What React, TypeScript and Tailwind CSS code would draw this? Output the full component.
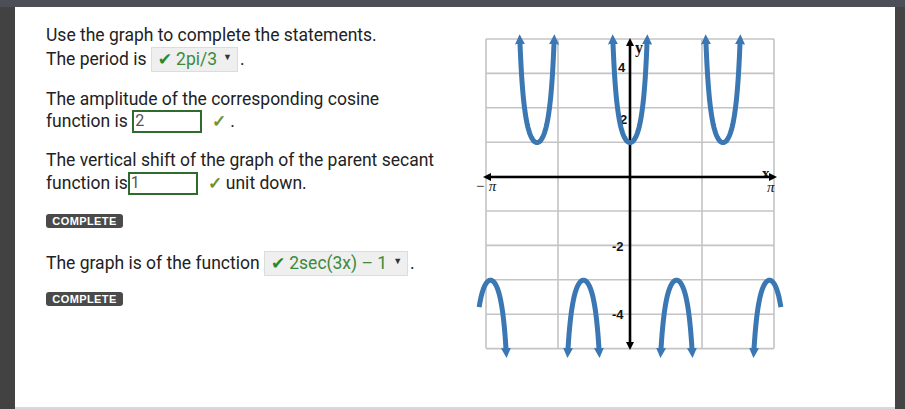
import React from 'react';

// graph scale in page pixels
const X0 = 630;
const Y0 = 177;
const SX = 139.5 / Math.PI;
const SY = 34.4;

const px = (x: number) => X0 + x * SX;
const py = (y: number) => Y0 - y * SY;

function branch(a: number, b: number) {
  const pts: string[] = [];
  const n = 60;
  for (let i = 0; i <= n; i++) {
    const t = a + ((b - a) * i) / n;
    const y = 2 / Math.cos(3 * t) - 1;
    pts.push(`${px(t).toFixed(2)},${py(y).toFixed(2)}`);
  }
  return 'M' + pts.join(' L');
}

const UP = 0.383;
const DOWN = Math.PI / 9;
const CUT = 0.256;

const uCenters = [-2 * Math.PI / 3, 0, 2 * Math.PI / 3];
const archCenters = [-Math.PI / 3, Math.PI / 3];

function Graph() {
  const vLines = [486, 558, 630, 702, 774];
  const hLines = [39, 73.4, 107.8, 142.2, 176.6, 211, 245.4, 279.8, 314.2, 348.6];
  return (
    <svg width="340" height="345" viewBox="465 25 340 345" className="block">
      <defs>
        <marker id="blueArrow" markerUnits="userSpaceOnUse" markerWidth="12" markerHeight="12" refX="1" refY="6" orient="auto-start-reverse">
          <path d="M0,1 L10,6 L0,11 Z" fill="#3a77b3" />
        </marker>
        <marker id="blackArrow" markerUnits="userSpaceOnUse" markerWidth="10" markerHeight="10" refX="1" refY="5" orient="auto-start-reverse">
          <path d="M0,1 L8,5 L0,9 Z" fill="#000" />
        </marker>
      </defs>
      {vLines.map((x) => (
        <line key={'v' + x} x1={x} y1={39} x2={x} y2={348.6} stroke="#c4c4c4" strokeWidth="1.6" />
      ))}
      {hLines.map((y) => (
        <line key={'h' + y} x1={486} y1={y} x2={774} y2={y} stroke="#c4c4c4" strokeWidth="1.6" />
      ))}
      <g fontFamily="'Liberation Sans', Arial, sans-serif" fontWeight="700" fontSize="13" fill="#111">
        <text x="618" y="72">4</text>
        <text x="620" y="124">2</text>
        <text x="612" y="251">-2</text>
        <text x="612" y="319">-4</text>
      </g>
      <g fontFamily="'Liberation Serif', 'Times New Roman', serif" fontSize="15" fill="#111">
        <text x="475" y="191" fontStyle="italic">− π</text>
        <text x="767" y="192" fontStyle="italic">π</text>
        <text x="635" y="53" fontWeight="700" fontSize="16">y</text>
        <text x="762" y="178" fontWeight="700" fontSize="15">x</text>
      </g>
      <line x1={490} y1={177} x2={770} y2={177} stroke="#000" strokeWidth="2.6" markerStart="url(#blackArrow)" markerEnd="url(#blackArrow)" />
      <line x1={630} y1={45} x2={630} y2={343} stroke="#000" strokeWidth="2.6" markerStart="url(#blackArrow)" markerEnd="url(#blackArrow)" />
      <g fill="none" stroke="#3a77b3" strokeWidth="5">
        {uCenters.map((c) => (
          <path key={'u' + c} d={branch(c - UP, c + UP)} markerStart="url(#blueArrow)" markerEnd="url(#blueArrow)" />
        ))}
        {archCenters.map((c) => (
          <path key={'a' + c} d={branch(c - DOWN, c + DOWN)} markerStart="url(#blueArrow)" markerEnd="url(#blueArrow)" />
        ))}
        <path d={branch(-Math.PI - CUT, -Math.PI + DOWN)} markerEnd="url(#blueArrow)" />
        <path d={branch(Math.PI - DOWN, Math.PI + CUT)} markerStart="url(#blueArrow)" />
      </g>
    </svg>
  );
}

function Dropdown({ value }: { value: string }) {
  return (
    <span className="inline-flex items-center h-[25px] pl-[6px] pr-[5px] bg-[#efefef] border border-[#dcdcdc] text-[#3b8a3b]">
      <span className="text-[#2a8a2a] text-[17px] mr-[4px] font-['DejaVu_Sans',sans-serif]">✔</span>
      <span>{value}</span>
      <span className="text-[9px] text-[#333] ml-[6px] -mt-[5px]">▼</span>
    </span>
  );
}

function InputBox({ value }: { value: string }) {
  return (
    <span className="inline-flex items-center h-[23px] w-[70px] border-2 border-[#2f6b2f] text-[16px] text-[#555] pl-[1px]">
      {value}
    </span>
  );
}

function Complete() {
  return (
    <div className="inline-flex items-center justify-center h-[14px] w-[77px] rounded-[3px] bg-[#4a4a4a] text-white text-[11px] font-bold tracking-[0.4px] font-['Liberation_Sans',Arial,sans-serif] leading-none">
      COMPLETE
    </div>
  );
}

export default function App() {
  return (
    <div className="w-[905px] h-[409px] flex flex-col bg-[#444] overflow-hidden">
      <div className="h-[7px] bg-[#4c4f57]" />
      <div className="flex flex-1">
        <div className="w-[15px] bg-[#424242]" />
        <div className="flex-1 bg-white flex border-b-2 border-[#d9d9d9]">
          <div className="w-[450px] pl-[31px] pt-[16px] text-[17.5px] text-[#222] font-['Roboto',sans-serif]">
            <div className="h-[24px] leading-[24px]">Use the graph to complete the statements.</div>
            <div className="h-[24px] flex items-center leading-[24px]">
              <span>The period is&nbsp;</span>
              <Dropdown value="2pi/3" />
              <span className="ml-[2px]">.</span>
            </div>
            <div className="h-[22px] leading-[22px] mt-[17px]">The amplitude of the corresponding cosine</div>
            <div className="h-[22px] flex items-center leading-[22px]">
              <span>function is&nbsp;</span>
              <InputBox value="2" />
              <span className="text-[#6f9232] font-bold text-[17px] ml-[10px]">✓</span>
              <span className="ml-[4px]">.</span>
            </div>
            <div className="h-[22px] leading-[22px] mt-[17px]">The vertical shift of the graph of the parent secant</div>
            <div className="h-[24px] flex items-center leading-[24px]">
              <span>function is</span>
              <InputBox value="1" />
              <span className="text-[#6f9232] font-bold text-[17px] ml-[10px]">✓</span>
              <span className="ml-[4px]">unit down.</span>
            </div>
            <div className="mt-[19px] h-[14px] flex">
              <Complete />
            </div>
            <div className="mt-[24px] h-[22px] flex items-center leading-[22px]">
              <span>The graph is of the function&nbsp;</span>
              <Dropdown value="2sec(3x) – 1" />
              <span className="ml-[2px]">.</span>
            </div>
            <div className="mt-[18px] h-[14px] flex">
              <Complete />
            </div>
          </div>
          <div className="pt-[18px]">
            <Graph />
          </div>
        </div>
        <div className="w-[10px] bg-[#444]" />
      </div>
    </div>
  );
}
